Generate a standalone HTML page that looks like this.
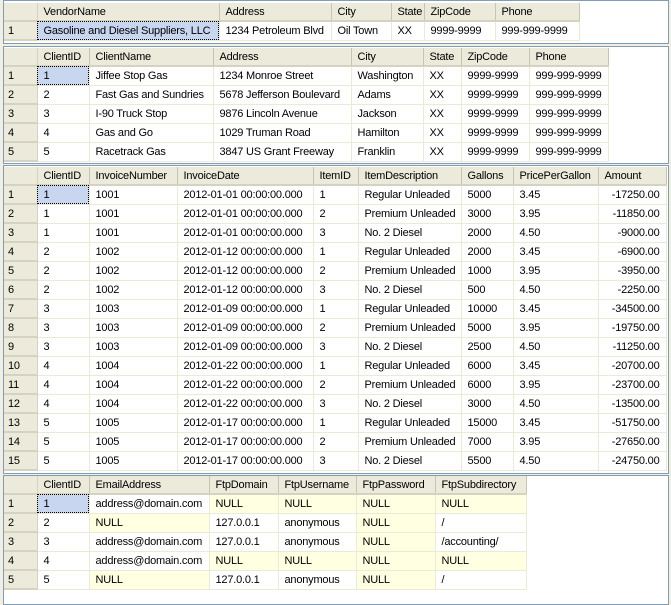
<!DOCTYPE html>
<html><head><meta charset="utf-8"><style>
*{margin:0;padding:0;box-sizing:border-box}
body{width:671px;height:592px;background:#f1efe2;position:relative;overflow:hidden;font-family:"Liberation Sans",sans-serif;font-size:11px;letter-spacing:-0.2px;color:#000}
.p{position:absolute;left:3px;width:666px;background:#fff;border:1px solid #7f9db9;overflow:hidden}
table{border-collapse:collapse;table-layout:fixed;position:absolute;left:0;top:0}
td,th{height:19px;padding:0 0 0 6px;white-space:nowrap;overflow:hidden;font-weight:normal;text-align:left;border-right:1px solid #ece9d8;border-bottom:1px solid #ece9d8}
th{height:18px;background:#ebeadb;border-bottom:2px solid #d6d2c2;border-right:1px solid #c8c4b4}
td.r{background:#ebeadb;padding-left:4px;border-bottom:2px solid #d6d2c2;border-right:1px solid #d6d2c2}
th.r{border-right:1px solid #d6d2c2}
td.s{background:#c8d6f0;outline:1px dotted #000;outline-offset:-1px}
td.n{background:#ffffe1}
td.a{text-align:right;padding-right:6px}
</style></head><body>

<div class="p" style="top:0;height:44px">
<table style="width:575px;top:2px"><colgroup><col style="width:33px"><col style="width:182px"><col style="width:112px"><col style="width:60px"><col style="width:33px"><col style="width:71px"><col style="width:84px"></colgroup>
<tr><th class="r"></th><th>VendorName</th><th>Address</th><th>City</th><th>State</th><th>ZipCode</th><th>Phone</th></tr>
<tr><td class="r">1</td><td class="s">Gasoline and Diesel Suppliers, LLC</td><td>1234 Petroleum Blvd</td><td>Oil Town</td><td>XX</td><td>9999-9999</td><td>999-999-9999</td></tr>
</table></div>

<div class="p" style="top:46px;height:118px">
<table style="width:604px;top:1px"><colgroup><col style="width:33px"><col style="width:52px"><col style="width:124px"><col style="width:138px"><col style="width:72px"><col style="width:38px"><col style="width:68px"><col style="width:79px"></colgroup>
<tr><th class="r"></th><th>ClientID</th><th>ClientName</th><th>Address</th><th>City</th><th>State</th><th>ZipCode</th><th>Phone</th></tr>
<tr><td class="r">1</td><td class="s">1</td><td>Jiffee Stop Gas</td><td>1234 Monroe Street</td><td>Washington</td><td>XX</td><td>9999-9999</td><td>999-999-9999</td></tr>
<tr><td class="r">2</td><td>2</td><td>Fast Gas and Sundries</td><td>5678 Jefferson Boulevard</td><td>Adams</td><td>XX</td><td>9999-9999</td><td>999-999-9999</td></tr>
<tr><td class="r">3</td><td>3</td><td>I-90 Truck Stop</td><td>9876 Lincoln Avenue</td><td>Jackson</td><td>XX</td><td>9999-9999</td><td>999-999-9999</td></tr>
<tr><td class="r">4</td><td>4</td><td>Gas and Go</td><td>1029 Truman Road</td><td>Hamilton</td><td>XX</td><td>9999-9999</td><td>999-999-9999</td></tr>
<tr><td class="r">5</td><td>5</td><td>Racetrack Gas</td><td>3847 US Grant Freeway</td><td>Franklin</td><td>XX</td><td>9999-9999</td><td>999-999-9999</td></tr>
</table></div>

<div class="p" style="top:165px;height:309px">
<table style="width:662px;top:1px"><colgroup><col style="width:33px"><col style="width:52px"><col style="width:88px"><col style="width:136px"><col style="width:45px"><col style="width:103px"><col style="width:52px"><col style="width:85px"><col style="width:68px"></colgroup>
<tr><th class="r"></th><th>ClientID</th><th>InvoiceNumber</th><th>InvoiceDate</th><th>ItemID</th><th>ItemDescription</th><th>Gallons</th><th>PricePerGallon</th><th>Amount</th></tr>
<tr><td class="r">1</td><td class="s">1</td><td>1001</td><td>2012-01-01 00:00:00.000</td><td>1</td><td>Regular Unleaded</td><td>5000</td><td>3.45</td><td class="a">-17250.00</td></tr>
<tr><td class="r">2</td><td>1</td><td>1001</td><td>2012-01-01 00:00:00.000</td><td>2</td><td>Premium Unleaded</td><td>3000</td><td>3.95</td><td class="a">-11850.00</td></tr>
<tr><td class="r">3</td><td>1</td><td>1001</td><td>2012-01-01 00:00:00.000</td><td>3</td><td>No. 2 Diesel</td><td>2000</td><td>4.50</td><td class="a">-9000.00</td></tr>
<tr><td class="r">4</td><td>2</td><td>1002</td><td>2012-01-12 00:00:00.000</td><td>1</td><td>Regular Unleaded</td><td>2000</td><td>3.45</td><td class="a">-6900.00</td></tr>
<tr><td class="r">5</td><td>2</td><td>1002</td><td>2012-01-12 00:00:00.000</td><td>2</td><td>Premium Unleaded</td><td>1000</td><td>3.95</td><td class="a">-3950.00</td></tr>
<tr><td class="r">6</td><td>2</td><td>1002</td><td>2012-01-12 00:00:00.000</td><td>3</td><td>No. 2 Diesel</td><td>500</td><td>4.50</td><td class="a">-2250.00</td></tr>
<tr><td class="r">7</td><td>3</td><td>1003</td><td>2012-01-09 00:00:00.000</td><td>1</td><td>Regular Unleaded</td><td>10000</td><td>3.45</td><td class="a">-34500.00</td></tr>
<tr><td class="r">8</td><td>3</td><td>1003</td><td>2012-01-09 00:00:00.000</td><td>2</td><td>Premium Unleaded</td><td>5000</td><td>3.95</td><td class="a">-19750.00</td></tr>
<tr><td class="r">9</td><td>3</td><td>1003</td><td>2012-01-09 00:00:00.000</td><td>3</td><td>No. 2 Diesel</td><td>2500</td><td>4.50</td><td class="a">-11250.00</td></tr>
<tr><td class="r">10</td><td>4</td><td>1004</td><td>2012-01-22 00:00:00.000</td><td>1</td><td>Regular Unleaded</td><td>6000</td><td>3.45</td><td class="a">-20700.00</td></tr>
<tr><td class="r">11</td><td>4</td><td>1004</td><td>2012-01-22 00:00:00.000</td><td>2</td><td>Premium Unleaded</td><td>6000</td><td>3.95</td><td class="a">-23700.00</td></tr>
<tr><td class="r">12</td><td>4</td><td>1004</td><td>2012-01-22 00:00:00.000</td><td>3</td><td>No. 2 Diesel</td><td>3000</td><td>4.50</td><td class="a">-13500.00</td></tr>
<tr><td class="r">13</td><td>5</td><td>1005</td><td>2012-01-17 00:00:00.000</td><td>1</td><td>Regular Unleaded</td><td>15000</td><td>3.45</td><td class="a">-51750.00</td></tr>
<tr><td class="r">14</td><td>5</td><td>1005</td><td>2012-01-17 00:00:00.000</td><td>2</td><td>Premium Unleaded</td><td>7000</td><td>3.95</td><td class="a">-27650.00</td></tr>
<tr><td class="r">15</td><td>5</td><td>1005</td><td>2012-01-17 00:00:00.000</td><td>3</td><td>No. 2 Diesel</td><td>5500</td><td>4.50</td><td class="a">-24750.00</td></tr>
</table></div>

<div class="p" style="top:475px;height:130px">
<table style="width:522px"><colgroup><col style="width:33px"><col style="width:52px"><col style="width:120px"><col style="width:69px"><col style="width:78px"><col style="width:79px"><col style="width:91px"></colgroup>
<tr><th class="r"></th><th>ClientID</th><th>EmailAddress</th><th>FtpDomain</th><th>FtpUsername</th><th>FtpPassword</th><th>FtpSubdirectory</th></tr>
<tr><td class="r">1</td><td class="s">1</td><td>address@domain.com</td><td class="n">NULL</td><td class="n">NULL</td><td class="n">NULL</td><td class="n">NULL</td></tr>
<tr><td class="r">2</td><td>2</td><td class="n">NULL</td><td>127.0.0.1</td><td>anonymous</td><td class="n">NULL</td><td>/</td></tr>
<tr><td class="r">3</td><td>3</td><td>address@domain.com</td><td>127.0.0.1</td><td>anonymous</td><td class="n">NULL</td><td>/accounting/</td></tr>
<tr><td class="r">4</td><td>4</td><td>address@domain.com</td><td class="n">NULL</td><td class="n">NULL</td><td class="n">NULL</td><td class="n">NULL</td></tr>
<tr><td class="r">5</td><td>5</td><td class="n">NULL</td><td>127.0.0.1</td><td>anonymous</td><td class="n">NULL</td><td>/</td></tr>
</table></div>
</body></html>
